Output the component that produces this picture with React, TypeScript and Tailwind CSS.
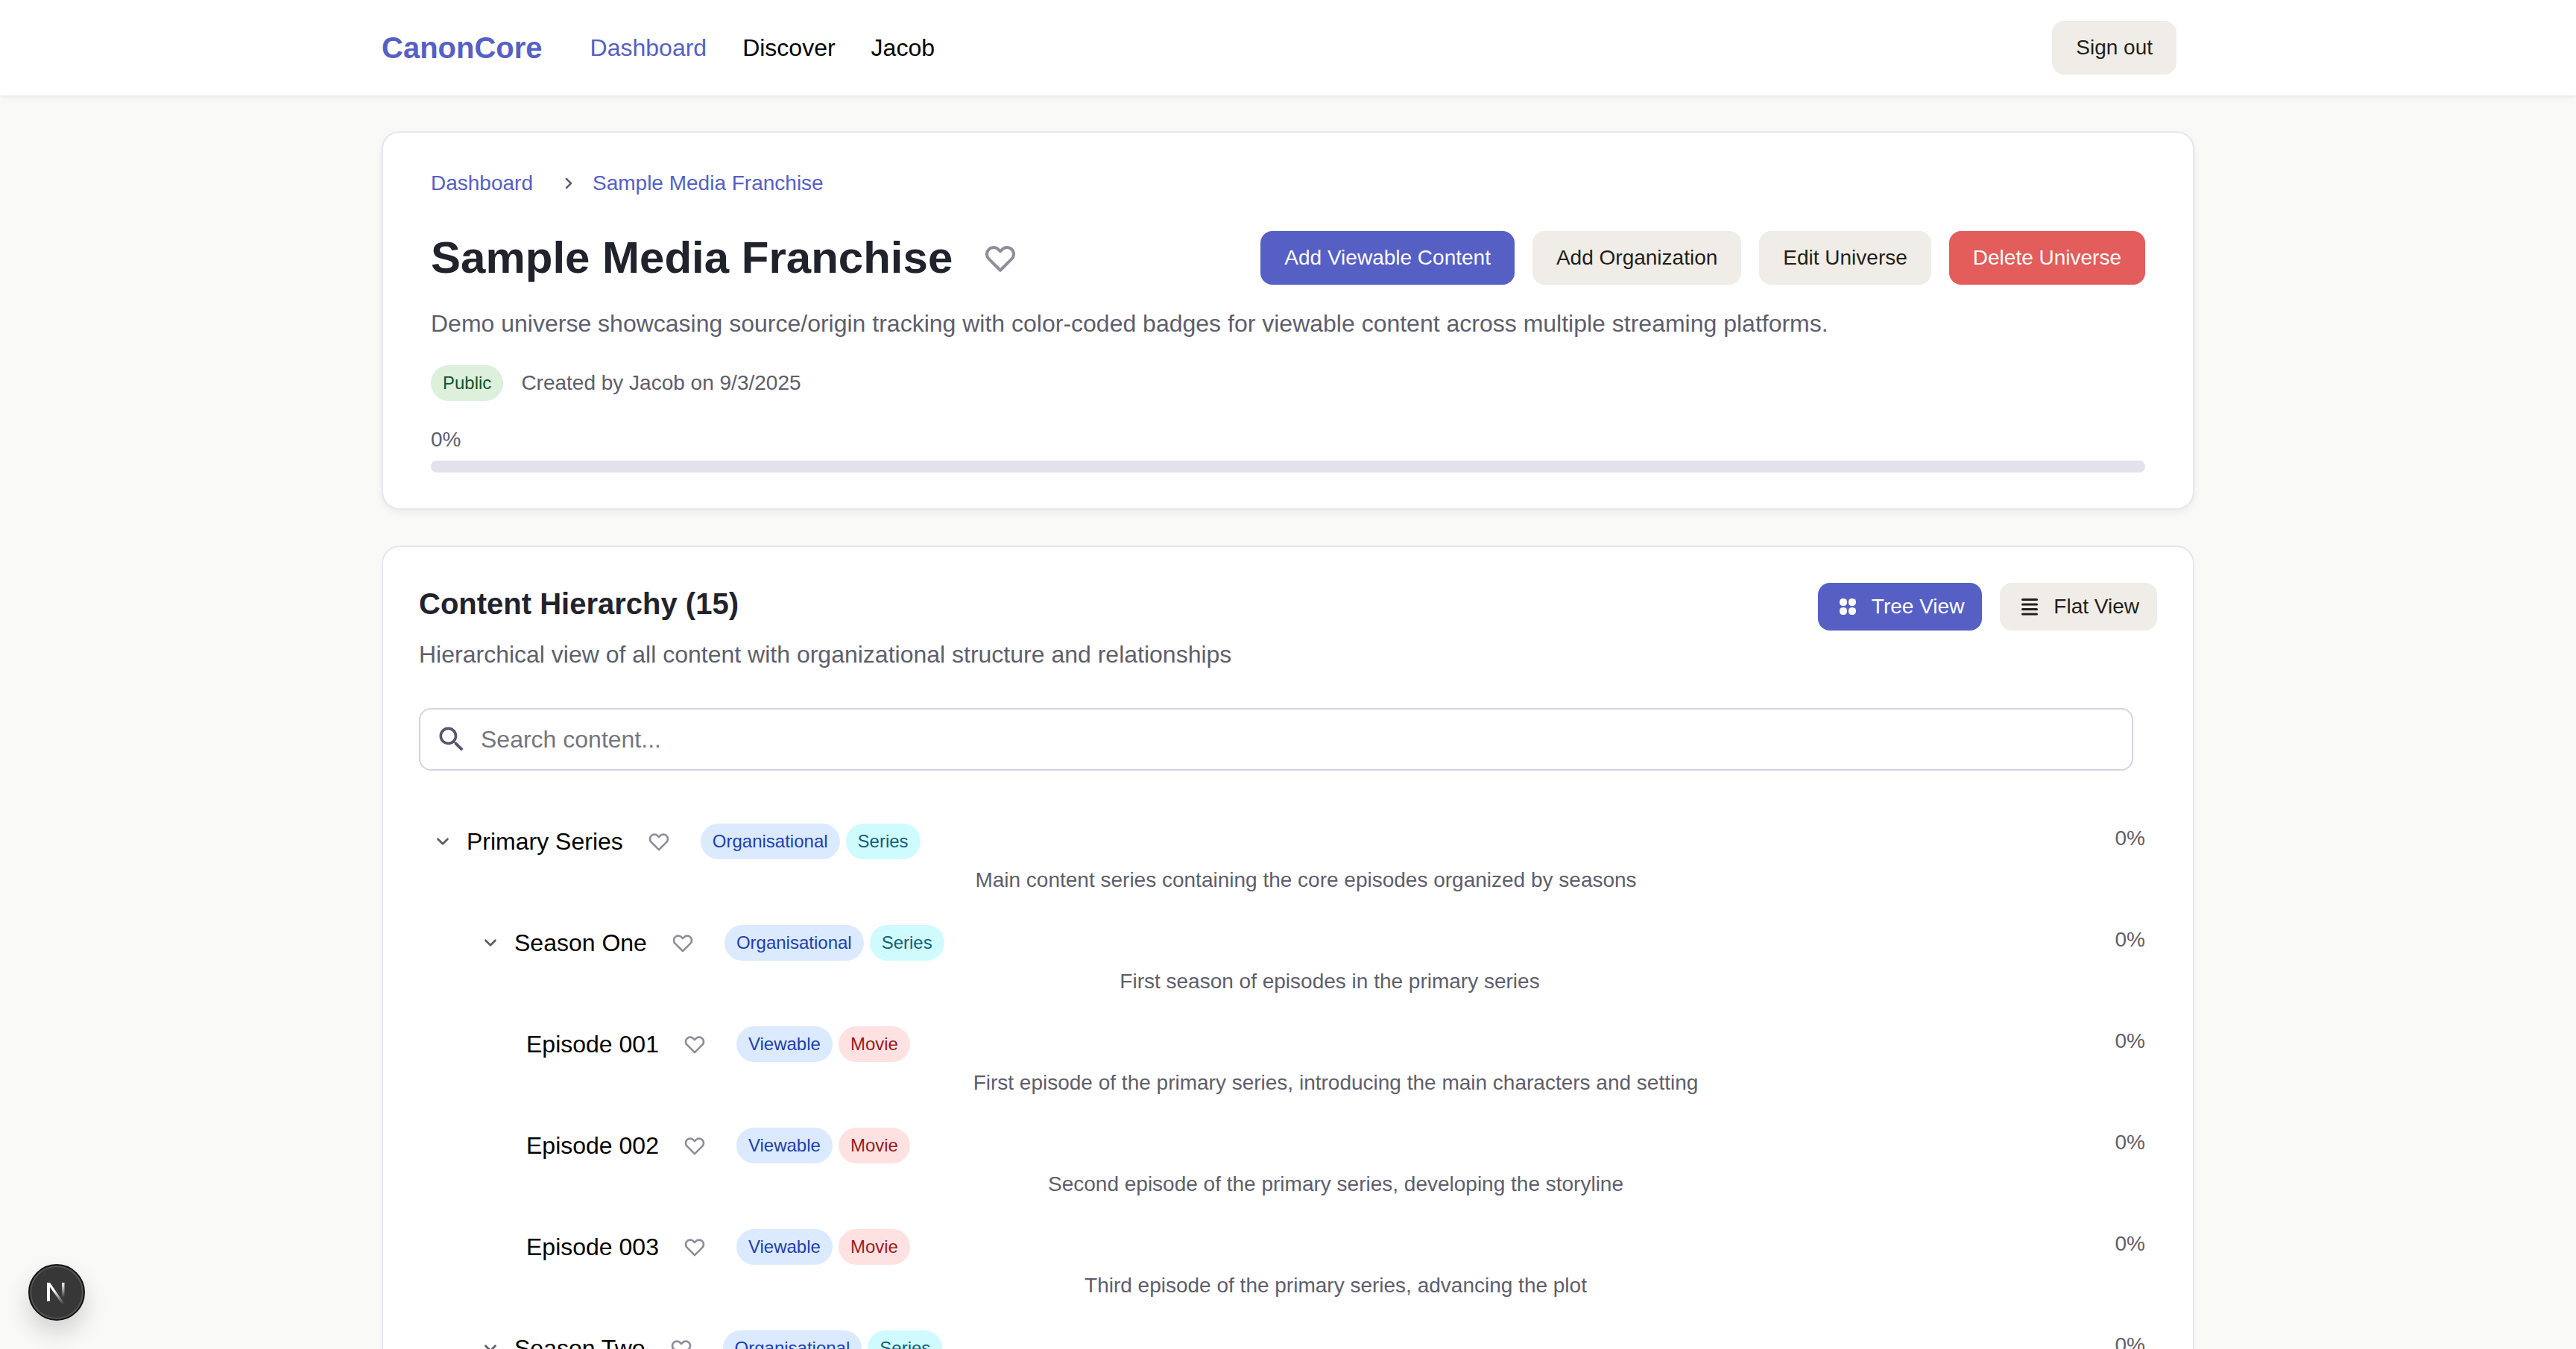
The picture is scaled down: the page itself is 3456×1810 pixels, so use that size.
import React from "react";
import { ChevronDown, ChevronRight } from "lucide-react";

function Heart({ className }: { className: string }) {
  return (
    <svg className={className} viewBox="0 0 24 24" fill="none" stroke="currentColor" strokeWidth={2} strokeLinecap="round" strokeLinejoin="round">
      <path d="M4.318 6.318a4.5 4.5 0 000 6.364L12 20.364l7.682-7.682a4.5 4.5 0 00-6.364-6.364L12 7.636l-1.318-1.318a4.5 4.5 0 00-6.364 0z" />
    </svg>
  );
}

const badgeStyles: Record<string, string> = {
  Organisational: "bg-[#dbeafe] text-[#1e40af]",
  Viewable: "bg-[#dbeafe] text-[#1e40af]",
  Series: "bg-[#cffafe] text-[#155e75]",
  Movie: "bg-[#fee2e2] text-[#991b1b]",
};

function Badge({ label }: { label: string }) {
  return <span className={"rounded-full px-4 h-12 flex items-center text-[24px] leading-8 " + badgeStyles[label]}>{label}</span>;
}

type Row = { title: string; desc: string; level: 0 | 1 | 2; badges: [string, string] };

const rows: Row[] = [
  { title: "Primary Series", desc: "Main content series containing the core episodes organized by seasons", level: 0, badges: ["Organisational", "Series"] },
  { title: "Season One", desc: "First season of episodes in the primary series", level: 1, badges: ["Organisational", "Series"] },
  { title: "Episode 001", desc: "First episode of the primary series, introducing the main characters and setting", level: 2, badges: ["Viewable", "Movie"] },
  { title: "Episode 002", desc: "Second episode of the primary series, developing the storyline", level: 2, badges: ["Viewable", "Movie"] },
  { title: "Episode 003", desc: "Third episode of the primary series, advancing the plot", level: 2, badges: ["Viewable", "Movie"] },
  { title: "Season Two", desc: "Second season of episodes in the primary series", level: 1, badges: ["Organisational", "Series"] },
];

function TreeRow({ row }: { row: Row }) {
  const indent = row.level === 0 ? "pl-4" : row.level === 1 ? "pl-20" : "pl-[144px]";
  return (
    <div className={"flex gap-4 pr-4 mb-10 " + indent}>
      {row.level < 2 && (
        <div className="w-8 h-12 flex items-center justify-center shrink-0">
          <ChevronDown className="w-[26px] h-[26px] text-[#5e5e6c]" strokeWidth={2.5} />
        </div>
      )}
      <div className="flex-1 min-w-0">
        <div className="flex justify-between items-start">
          <div className="flex items-center h-12">
            <span className="text-[32px] leading-10 text-black">{row.title}</span>
            <div className="ml-6 mr-8 p-2 text-[#8e8e9a]">
              <Heart className="w-8 h-8" />
            </div>
            <div className="flex gap-2">
              {row.badges.map((b) => (
                <Badge key={b} label={b} />
              ))}
            </div>
          </div>
          <span className="text-[28px] leading-10 text-[#5e5e6c]">0%</span>
        </div>
        <p className="mt-2 text-center text-[28px] leading-10 text-[#5e5e6c]">{row.desc}</p>
      </div>
    </div>
  );
}

const primaryBtn = "h-[72px] px-8 rounded-2xl flex items-center text-[28px] bg-[#5660c4] text-white";
const grayBtn = "h-[72px] px-8 rounded-2xl flex items-center text-[28px] bg-[#f0ede8] text-[#231f1a]";

export default function App() {
  return (
    <div className="h-screen overflow-hidden bg-[#f9f9f7] relative font-['Liberation_Sans',Arial,sans-serif]">
      <header className="h-32 bg-white shadow-[0_2px_6px_rgba(0,0,0,0.08)]">
        <div className="w-[2432px] mx-auto h-full pr-6 flex items-center justify-between">
          <div className="flex items-center">
            <span className="text-[40px] font-bold text-[#5660c4] mr-16">CanonCore</span>
            <nav className="flex items-center gap-12 text-[32px]">
              <span className="text-[#5660c4]">Dashboard</span>
              <span className="text-black">Discover</span>
              <span className="text-black">Jacob</span>
            </nav>
          </div>
          <button className={grayBtn}>Sign out</button>
        </div>
      </header>

      <main className="w-[2432px] mx-auto pt-12">
        <section className="bg-white border-2 border-[#e6e6f0] rounded-3xl px-16 pt-12 pb-12 shadow-[0_4px_8px_rgba(30,30,60,0.06)]">
          <div className="flex items-center text-[28px] leading-10 text-[#5660c4]">
            <span>Dashboard</span>
            <ChevronRight className="w-6 h-6 ml-9 mr-5 text-[#5e5e6c]" strokeWidth={2.5} />
            <span>Sample Media Franchise</span>
          </div>
          <div className="flex items-center justify-between mt-11">
            <div className="flex items-center">
              <h1 className="text-[60px] leading-[72px] font-bold text-[#22222c]">Sample Media Franchise</h1>
              <Heart className="w-12 h-12 ml-10 text-[#8e8e9a]" />
            </div>
            <div className="flex gap-6">
              <button className={primaryBtn}>Add Viewable Content</button>
              <button className={grayBtn}>Add Organization</button>
              <button className={grayBtn}>Edit Universe</button>
              <button className="h-[72px] px-8 rounded-2xl flex items-center text-[28px] bg-[#e25d5b] text-white">Delete Universe</button>
            </div>
          </div>
          <p className="mt-7 text-[32px] leading-12 text-[#5e5e6c]">
            Demo universe showcasing source/origin tracking with color-coded badges for viewable content across multiple streaming platforms.
          </p>
          <div className="flex items-center gap-6 mt-8">
            <span className="h-12 px-4 rounded-full flex items-center text-[24px] bg-[#dcf0dc] text-[#14532d]">Public</span>
            <span className="text-[28px] text-[#5e5e6c]">Created by Jacob on 9/3/2025</span>
          </div>
          <div className="mt-8 text-[28px] leading-10 text-[#5e5e6c]">0%</div>
          <div className="mt-2 h-4 rounded-lg bg-[#e2e2ec]" />
        </section>

        <section className="mt-12 bg-white border-2 border-[#e6e6f0] rounded-3xl px-12 pt-12 pb-12">
          <div className="flex items-start justify-between">
            <div>
              <h2 className="text-[40px] leading-[56px] font-bold text-[#22222c]">Content Hierarchy (15)</h2>
              <p className="mt-4 text-[32px] leading-[48px] text-[#5e5e6c]">Hierarchical view of all content with organizational structure and relationships</p>
            </div>
            <div className="flex gap-6">
              <button className="h-16 pl-7 pr-6 rounded-2xl flex items-center gap-5 text-[28px] bg-[#5660c4] text-white">
                <svg className="w-6 h-6" viewBox="0 0 24 24" fill="currentColor">
                  <rect x="1" y="1" width="10" height="10" rx="4.5" />
                  <rect x="13" y="1" width="10" height="10" rx="4.5" />
                  <rect x="1" y="13" width="10" height="10" rx="4.5" />
                  <rect x="13" y="13" width="10" height="10" rx="4.5" />
                </svg>
                Tree View
              </button>
              <button className="h-16 pl-7 pr-6 rounded-2xl flex items-center gap-5 text-[28px] bg-[#f0ede8] text-[#231f1a]">
                <svg className="w-6 h-6" viewBox="0 0 24 24" fill="currentColor">
                  <rect x="1" y="1" width="22" height="3" rx="1.5" />
                  <rect x="1" y="7.5" width="22" height="3" rx="1.5" />
                  <rect x="1" y="14" width="22" height="3" rx="1.5" />
                  <rect x="1" y="20.5" width="22" height="3" rx="1.5" />
                </svg>
                Flat View
              </button>
            </div>
          </div>
          <div className="mt-12 mr-8 h-[84px] rounded-2xl border-2 border-[#d4d2e4] flex items-center pl-5">
            <svg className="w-11 h-11 text-[#55556b]" viewBox="0 0 24 24" fill="currentColor">
              <path d="M15.5 14h-.79l-.28-.27A6.471 6.471 0 0 0 16 9.5 6.5 6.5 0 1 0 9.5 16c1.61 0 3.09-.59 4.23-1.57l.27.28v.79l5 4.99L20.49 19l-4.99-5zm-6 0C7.01 14 5 11.99 5 9.5S7.01 5 9.5 5 14 7.01 14 9.5 11.99 14 9.5 14z" />
            </svg>
            <span className="ml-[17px] text-[32px] text-[#757580]">Search content...</span>
          </div>
          <div className="mt-[71px]">
            {rows.map((r) => (
              <TreeRow key={r.title} row={r} />
            ))}
          </div>
        </section>
      </main>

      <div className="absolute left-[38px] top-[1696px] w-[76px] h-[76px] rounded-full bg-[#373737] border-2 border-[#141414] shadow-[inset_0_0_0_2px_#555555,0_16px_32px_rgba(0,0,0,0.16)] flex items-center justify-center">
        <svg className="w-9 h-9" viewBox="0 0 36 36" fill="none">
          <defs>
            <linearGradient id="nxd" x1="0" y1="0" x2="0" y2="1">
              <stop offset="0.35" stopColor="#fff" />
              <stop offset="1" stopColor="#fff" stopOpacity="0" />
            </linearGradient>
            <linearGradient id="nxs" x1="0" y1="0" x2="0" y2="1">
              <stop offset="0" stopColor="#fff" />
              <stop offset="1" stopColor="#fff" stopOpacity="0" />
            </linearGradient>
          </defs>
          <path d="M5 5h4v25H5z" fill="#fff" />
          <path d="M5 5h4l20 29h-4z" fill="url(#nxd)" />
          <path d="M25 5h3.5v20H25z" fill="url(#nxs)" />
        </svg>
      </div>
    </div>
  );
}
